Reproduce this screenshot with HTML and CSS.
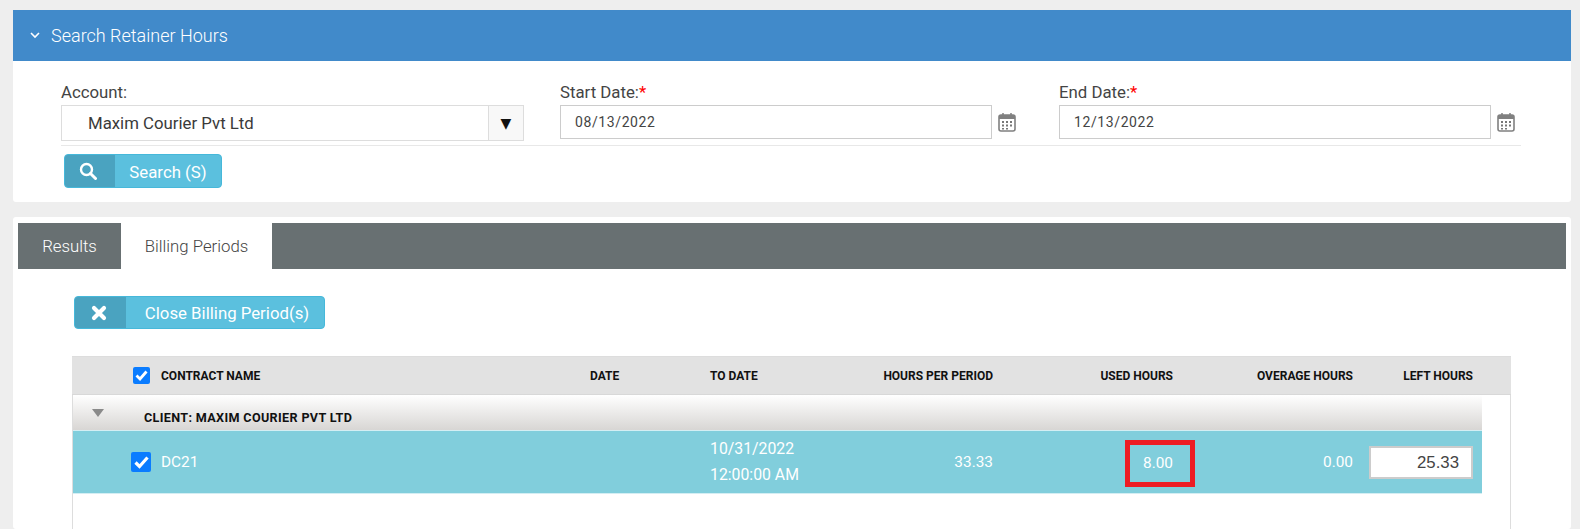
FILE: index.html
```html
<!DOCTYPE html>
<html lang="en">
<head>
<meta charset="utf-8">
<title>Search Retainer Hours</title>
<link rel="stylesheet" href="styles.css">
</head>
<body>
<section class="panel search-panel">
  <header class="panel-head">
    <svg class="chev" width="12" height="8" viewBox="0 0 12 8"><path d="M2 2l4 4 4-4" fill="none" stroke="#fff" stroke-width="1.6"/></svg>
    <span>Search Retainer Hours</span>
  </header>
  <div class="search-body">
    <div class="fields">
      <div class="field field-account">
        <label class="lbl">Account:</label>
        <div class="select"><span class="select-val">Maxim Courier Pvt Ltd</span><span class="select-arrow">▼</span></div>
      </div>
      <div class="field field-date">
        <label class="lbl">Start Date:<span class="req">*</span></label>
        <div class="date-row">
          <div class="date-input">08/13/2022</div>
          <svg class="cal" width="18" height="20" viewBox="0 0 18 20"><rect x="1" y="3" width="16" height="16" rx="2" fill="#fff" stroke="#808080" stroke-width="1.6"/><path d="M1 5.5a2 2 0 0 1 2-2.5h12a2 2 0 0 1 2 2.500v1.500H1z" fill="#808080"/><path d="M5 1v3M13 1v3" stroke="#808080" stroke-width="1.500"/><path d="M4 9h2v2H4zM8 9h2v2H8zM12 9h2v2h-2zM4 12.500h2v2H4zM8 12.500h2v2H8zM12 12.500h2v2h-2zM8 16h2v1.500H8zM4 16h2v1.500H4z" fill="#777"/></svg>
        </div>
      </div>
      <div class="field field-date">
        <label class="lbl">End Date:<span class="req">*</span></label>
        <div class="date-row">
          <div class="date-input">12/13/2022</div>
          <svg class="cal" width="18" height="20" viewBox="0 0 18 20"><rect x="1" y="3" width="16" height="16" rx="2" fill="#fff" stroke="#808080" stroke-width="1.6"/><path d="M1 5.5a2 2 0 0 1 2-2.5h12a2 2 0 0 1 2 2.500v1.500H1z" fill="#808080"/><path d="M5 1v3M13 1v3" stroke="#808080" stroke-width="1.500"/><path d="M4 9h2v2H4zM8 9h2v2H8zM12 9h2v2h-2zM4 12.500h2v2H4zM8 12.500h2v2H8zM12 12.500h2v2h-2zM8 16h2v1.500H8zM4 16h2v1.500H4z" fill="#777"/></svg>
        </div>
      </div>
    </div>
    <div class="actions">
      <button class="btn btn-search" type="button">
        <span class="btn-icon"><svg width="18" height="18" viewBox="0 0 18 18"><circle cx="7.500" cy="7.500" r="5.500" fill="none" stroke="#fff" stroke-width="2.400"/><path d="M11.500 11.500l5 5" stroke="#fff" stroke-width="3" stroke-linecap="round"/></svg></span>
        <span class="btn-text">Search (S)</span>
      </button>
    </div>
  </div>
</section>

<section class="panel results-panel">
  <nav class="tabs">
    <span class="tab">Results</span>
    <span class="tab tab-active">Billing Periods</span>
  </nav>
  <div class="tab-body">
    <button class="btn btn-close" type="button">
      <span class="btn-icon"><svg width="16" height="16" viewBox="0 0 16 16"><path d="M3 3l10 10M13 3L3 13" stroke="#fff" stroke-width="4.200" stroke-linecap="round"/></svg></span>
      <span class="btn-text">Close Billing Period(s)</span>
    </button>
    <div class="grid-table">
      <div class="row head-row">
        <div class="cell-check"><span class="check check-sm"><svg width="13" height="11" viewBox="0 0 13 11"><path d="M1.500 5.500l3.500 3.500 6.500-7.500" fill="none" stroke="#fff" stroke-width="2.800"/></svg></span></div>
        <div>CONTRACT NAME</div>
        <div>DATE</div>
        <div>TO DATE</div>
        <div class="num">HOURS PER PERIOD</div>
        <div class="num">USED HOURS</div>
        <div class="num">OVERAGE HOURS</div>
        <div class="num">LEFT HOURS</div>
      </div>
      <div class="group-row">
        <span class="group-tri"></span>
        <span class="group-name">CLIENT: MAXIM COURIER PVT LTD</span>
      </div>
      <div class="row data-row">
        <div class="cell-check"><span class="check"><svg width="15" height="13" viewBox="0 0 15 13"><path d="M1.500 6.500l4 4 8-9" fill="none" stroke="#fff" stroke-width="3.200"/></svg></span></div>
        <div>DC21</div>
        <div></div>
        <div class="stack"><div>10/31/2022</div><div>12:00:00 AM</div></div>
        <div class="num">33.33</div>
        <div class="num used"><span class="marker">8.00</span></div>
        <div class="num">0.00</div>
        <div class="num"><div class="left-input">25.33</div></div>
      </div>
    </div>
  </div>
</section>
</body>
</html>
```
FILE: styles.css
```css
* { box-sizing: border-box; }
html, body { height: 100%; }
body {
  margin: 0;
  padding: 10px 9px 0 13px;
  background: #eeeeee;
  font-family: Roboto, "Liberation Sans", sans-serif;
  color: #444;
  display: flex;
  flex-direction: column;
  gap: 15px;
  overflow: hidden;
}
.panel { background: #fff; border-radius: 3px; }
.search-panel { height: 192px; flex: none; }
.panel-head {
  height: 51px;
  background: #418aca;
  color: #fff;
  display: flex;
  align-items: center;
  padding: 0 0 1px 16px;
  gap: 10px;
  font-size: 18px;
  font-weight: 300;
}
.chev { flex: none; }
.search-body { padding: 19px 50px 0 48px; }
.fields {
  display: flex;
  height: 66px;
  border-bottom: 1px solid #e8e8e8;
}
.field { display: flex; flex-direction: column; flex: none; }
.field-account { width: 463px; margin-right: 36px; }
.field-date { width: 499px; }
.lbl { font-size: 16.800px; line-height: 24px; height: 25px; color: #444; }
.req { color: #f00; }
.select {
  height: 36px;
  border: 1px solid #ddd;
  display: flex;
  align-items: center;
}
.select-val { flex: 1; padding-left: 26px; font-size: 16.800px; color: #3a3a3a; }
.select-arrow {
  width: 35px;
  height: 100%;
  border-left: 1px solid #ddd;
  background: #f8f8f8;
  color: #111;
  font: 14px "DejaVu Sans", sans-serif;
  display: flex;
  align-items: center;
  justify-content: center;
}
.date-row { display: flex; align-items: flex-start; }
.date-input {
  width: 432px;
  height: 34px;
  border: 1px solid #ccc;
  padding-left: 14px;
  font-size: 14px;
  letter-spacing: 0.6px;
  line-height: 33px;
  color: #444;
}
.cal { margin: 7px 0 0 6px; flex: none; }
.actions { padding: 8px 0 0 3px; }
.btn {
  display: flex;
  padding: 0;
  border: 1px solid #46b8da;
  border-radius: 4px;
  background: #5bc0de;
  color: #fff;
  font-family: inherit;
  font-size: 16.800px;
  overflow: hidden;
}
.btn-icon {
  background: #4aa3c0;
  display: flex;
  align-items: center;
  justify-content: center;
  flex: none;
}
.btn-text { flex: 1; display: flex; align-items: center; justify-content: center; padding-top: 1px; }
.btn-search { width: 158px; height: 34px; }
.btn-search .btn-icon { width: 50px; padding-right: 5px; }
.btn-close { width: 251px; height: 33px; }
.btn-close .btn-icon { width: 51px; padding-right: 4px; }
.btn-close .btn-text { padding-left: 4px; }
.results-panel {
  flex: 1;
  min-height: 0;
  padding: 6px 5px 0;
  display: flex;
  flex-direction: column;
}
.tabs {
  height: 46px;
  flex: none;
  background: #687072;
  display: flex;
}
.tab {
  width: 103px;
  display: flex;
  align-items: center;
  justify-content: center;
  color: #fff;
  font-size: 16.800px;
  font-weight: 300;
}
.tab-active { width: 151px; background: #fff; color: #444; }
.tab-body { flex: 1; min-height: 0; padding: 27px 54px 0 56px; display: flex; flex-direction: column; }
.grid-table {
  margin: 27px 0 0 -2px;
  flex: 1;
  border-left: 1px solid #ddd;
  border-right: 1px solid #ddd;
  width: 1439px;
}
.row {
  display: grid;
  grid-template-columns: 88px 429px 120px 100px 183px 180px 180px 120px;
  align-items: center;
}
.head-row {
  height: 39px;
  background: #e2e2e2;
  border-top: 1px solid #ddd;
  border-bottom: 1px solid #d8d8d8;
  margin: 0 -1px;
  padding-left: 1px;
  color: #111;
  font-size: 12px;
  font-weight: 700;
}
.num { text-align: right; }
.cell-check { display: flex; justify-content: flex-end; padding-right: 10px; }
.check {
  width: 20px;
  height: 20px;
  background: #0a7cff;
  border-radius: 2px;
  display: flex;
  align-items: center;
  justify-content: center;
}
.check-sm { width: 17px; height: 17px; margin-right: 1px; }
.group-row {
  width: 1409px;
  height: 35px;
  background: linear-gradient(#fff, #d8d6d4);
  display: flex;
  position: relative;
  padding-left: 71px;
  align-items: flex-end;
  padding-bottom: 5px;
  color: #111;
  font-size: 12.600px;
  font-weight: 700;
  letter-spacing: 0.35px;
}
.group-tri {
  position: absolute;
  left: 19px;
  top: 14px;
  border-left: 6.500px solid transparent;
  border-right: 6.500px solid transparent;
  border-top: 8px solid #8a8a8a;
}
.data-row {
  width: 1409px;
  height: 64px;
  background: #81cedc;
  border-top: 1px solid #d4eef3;
  border-bottom: 1px solid #d4eef3;
  color: #fff;
  font-size: 15.400px;
}
.stack { line-height: 26px; font-size: 15.800px; }
.used { display: flex; justify-content: flex-end; }
.marker {
  flex: none;
  width: 70px;
  height: 47px;
  margin: 3px -22px 0 0;
  border: 5px solid #ed1c24;
  padding-right: 17px;
  line-height: 37px;
}
.left-input {
  margin-left: 16px;
  height: 33px;
  border: 2px solid #ccc;
  background: #fff;
  color: #444;
  font: 16.800px/29px "Liberation Sans", sans-serif;
  padding-right: 12px;
}
```
